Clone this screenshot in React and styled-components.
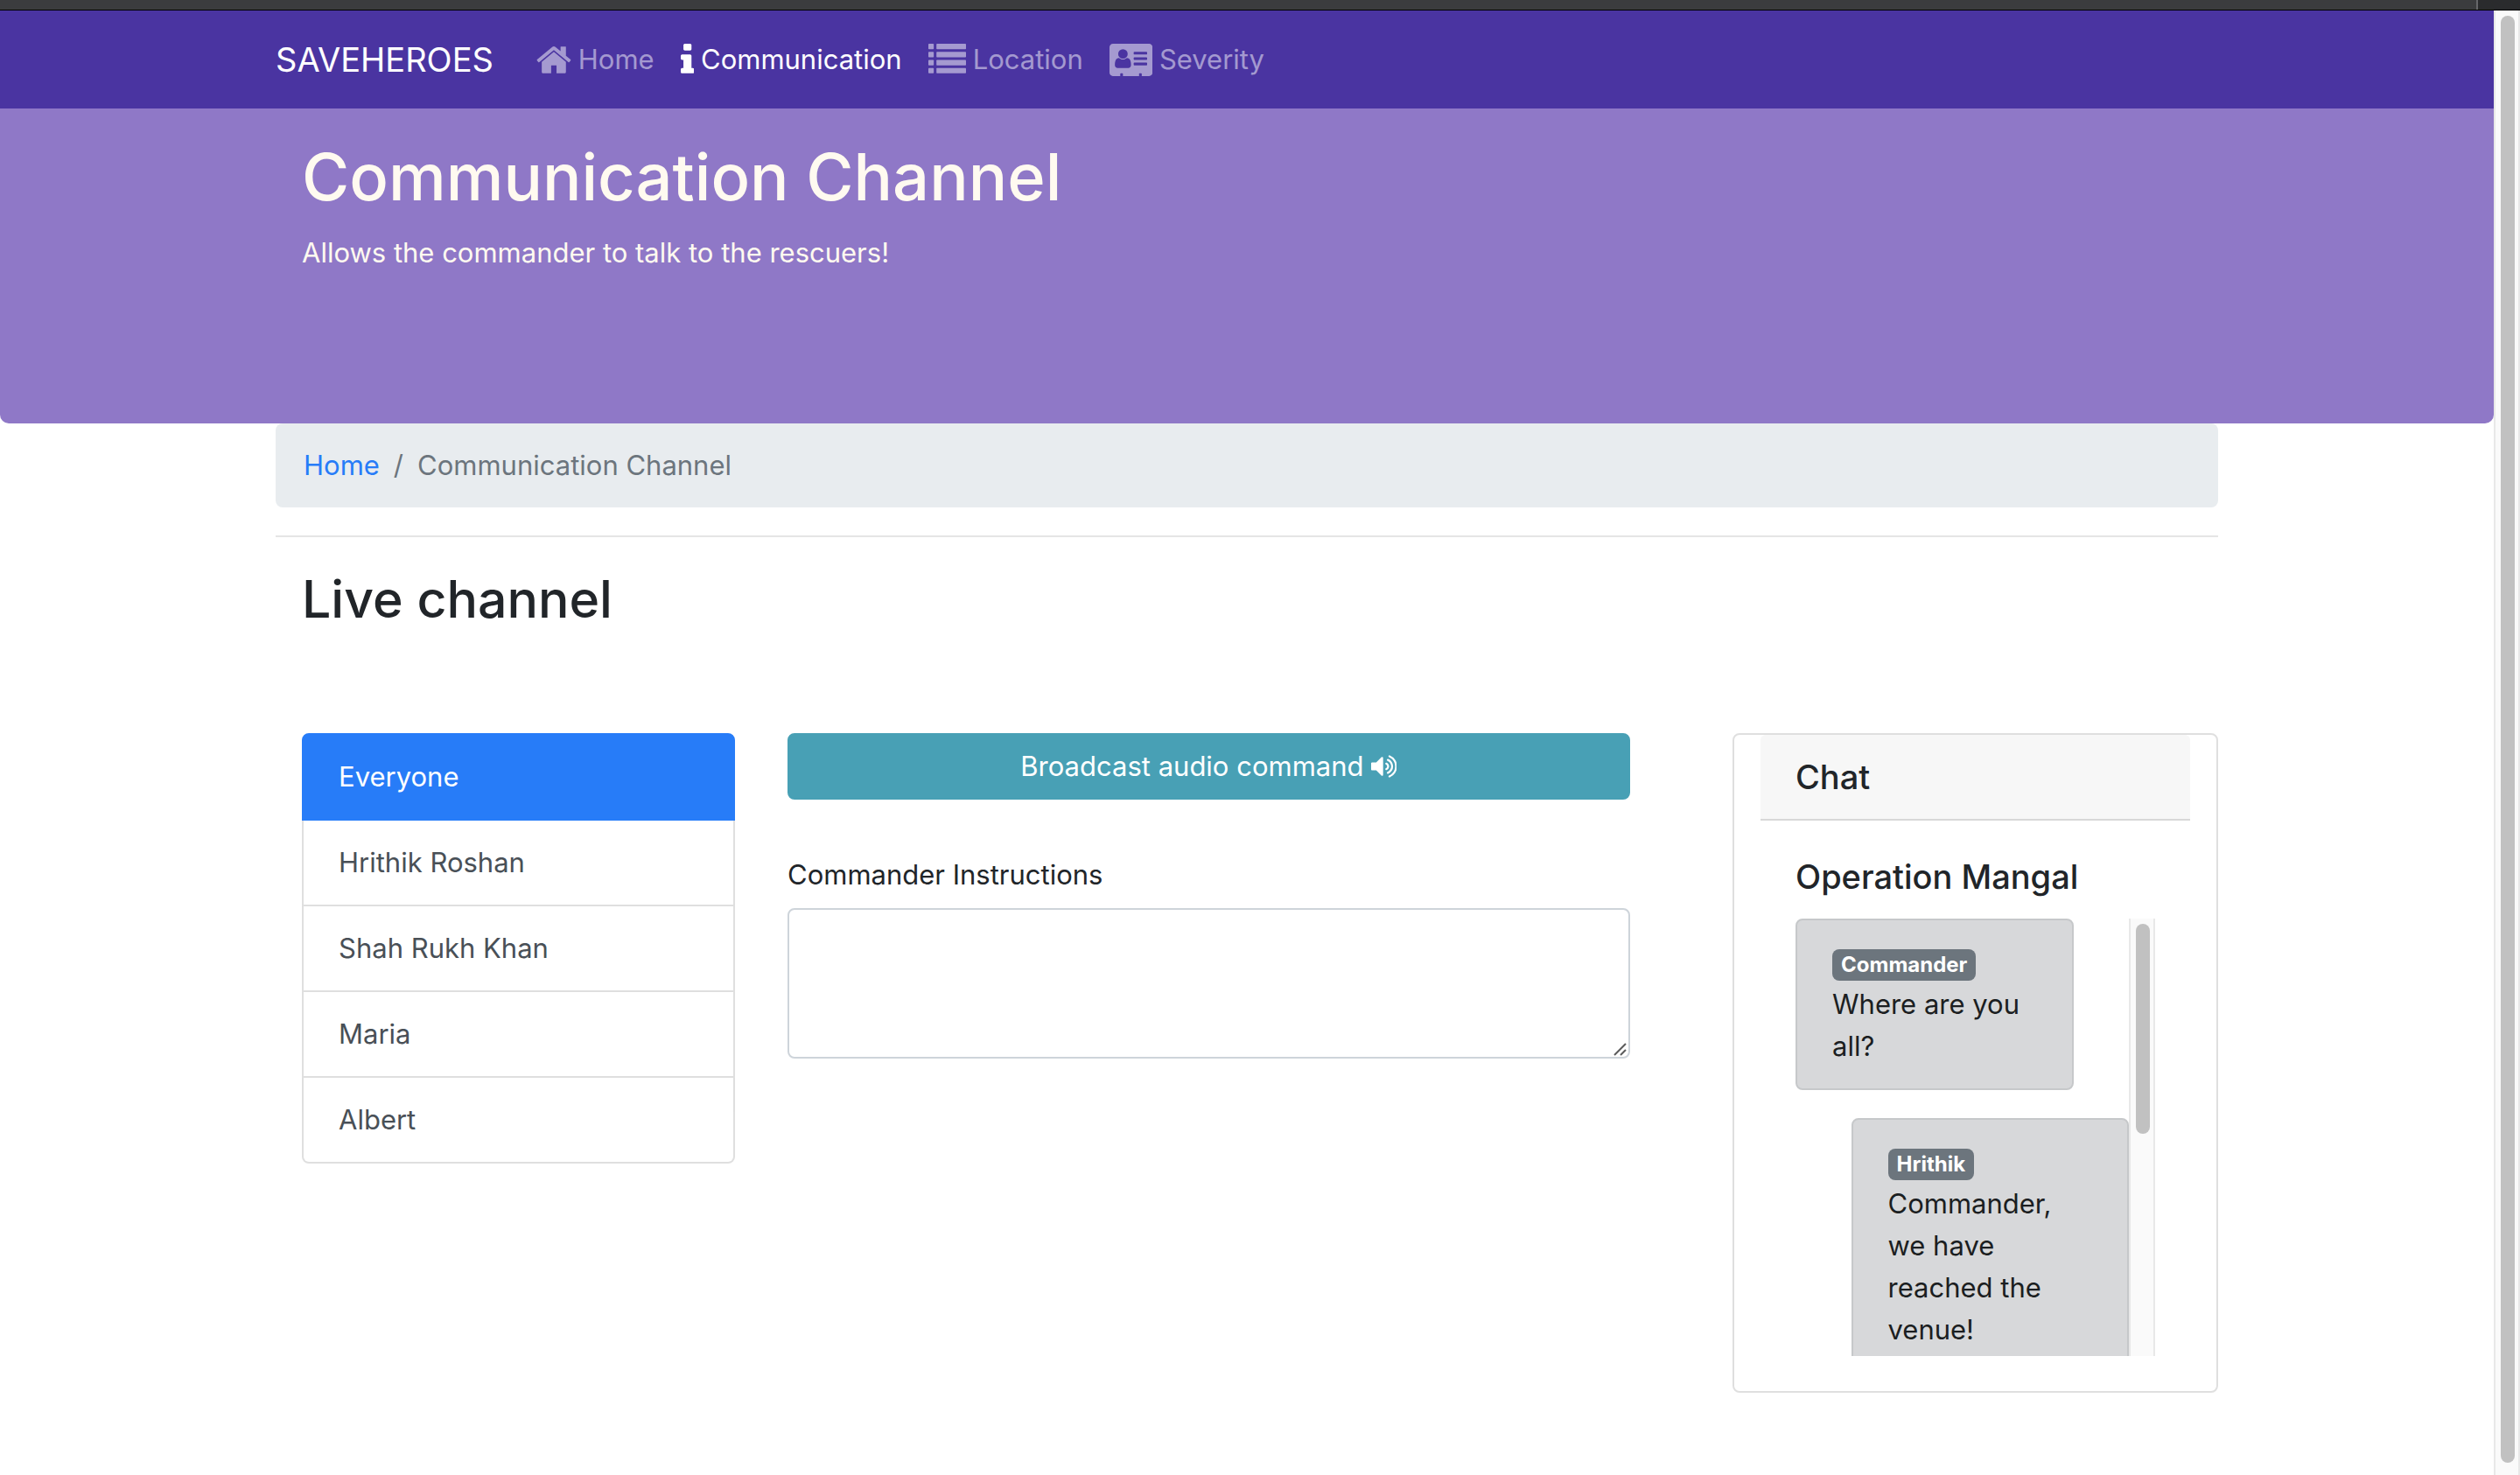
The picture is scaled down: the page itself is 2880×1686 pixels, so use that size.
import React from "react";
import styled, { createGlobalStyle, css } from "styled-components";

const GlobalStyle = createGlobalStyle`
  *, *::before, *::after { box-sizing: border-box; }
  body {
    margin: 0;
    background: #fff;
    color: #212529;
    font-family: Inter, "Liberation Sans", sans-serif;
    font-size: 31px;
    line-height: 48px;
  }
  h1, h2, h3, p, ol, ul { margin: 0; padding: 0; font-weight: inherit; }
  ol, ul { list-style: none; }
  a { color: inherit; text-decoration: none; }
`;

const Window = styled.div`
  display: flex;
  flex-direction: column;
  min-height: 100vh;
`;

const ToolbarEdge = styled.div`
  display: flex;
  height: 12px;
  background: #3b3c3e;
  border-bottom: 1px solid #000;
`;

const ToolbarCorner = styled.div`
  width: 50px;
  margin-left: auto;
  background: #2a2b2d;
  border-left: 2px solid #66676a;
`;

const Viewport = styled.div`
  display: flex;
  flex: 1;
`;

const Page = styled.div`
  flex: 1;
  min-width: 0;
`;

const Track = styled.div`
  display: flex;
  flex: none;
  width: 30px;
  padding: 6px 4px ${(p) => p.$end}px 6px;
  background: #fafafa;
  border: solid #e8e8e8;
  border-width: 0 2px;
`;

const Thumb = styled.div`
  width: 16px;
  height: ${(p) => p.$length};
  border-radius: 8px;
  background: #c1c1c1;
`;

const Container = styled.div`
  width: 100%;
  max-width: 2220px;
  margin: 0 auto;
  padding: 0 ${(p) => (p.$inset ? "30px" : "0")};
`;

const Navbar = styled.nav`
  background: #4a34a1;
  padding: 16px 0;
`;

const NavRow = styled(Container)`
  display: flex;
  align-items: center;
  min-height: 80px;
`;

const Brand = styled.a`
  margin-right: 34px;
  color: #fff;
  font-size: 38px;
`;

const NavList = styled.ul`
  display: flex;
`;

const NavLink = styled.a`
  display: flex;
  align-items: center;
  gap: 8px;
  padding: 16px 15px;
  color: ${(p) => (p.$active ? "#fff" : "rgba(255, 255, 255, 0.5)")};
`;

const Glyph = styled.svg`
  display: block;
  flex: none;
  height: ${(p) => p.$size}px;
  fill: currentColor;
`;

const Hero = styled.header`
  min-height: 360px;
  padding: 30px 0;
  border-radius: 0 0 10px 10px;
  background: #8f78c7;
  color: #fffaf0;
`;

const HeroTitle = styled.h1`
  margin-bottom: 15px;
  font-size: 74px;
  font-weight: 500;
  line-height: 96px;
`;

const Breadcrumb = styled.ol`
  display: flex;
  gap: 16px;
  padding: 24px 32px;
  border-radius: 8px;
  background: #e8ecef;
  color: #6c757d;
`;

const Crumb = styled.li`
  display: flex;
  gap: 16px;

  & + &::before {
    content: "/";
  }
`;

const CrumbLink = styled.a`
  color: #277cf8;
`;

const Rule = styled.hr`
  margin: 32px 0;
  border: 0;
  border-top: 2px solid rgba(0, 0, 0, 0.1);
`;

const SectionTitle = styled.h2`
  padding: 0 30px;
  margin-bottom: 114px;
  font-size: 59px;
  font-weight: 500;
  line-height: 78px;
`;

const Columns = styled.main`
  display: grid;
  grid-template-columns: 3fr 6fr 3fr;
  align-items: start;
`;

const Column = styled.section`
  min-width: 0;
  padding: 0 30px;
`;

const FormColumn = styled(Column)`
  display: grid;
  grid-template-columns: 11fr 1fr;
`;

const PersonList = styled.div`
  display: flex;
  flex-direction: column;
`;

const Person = styled.button`
  padding: 24px 40px;
  border: 2px solid rgba(0, 0, 0, 0.125);
  background: #fff;
  color: #495057;
  font: inherit;
  text-align: left;
  cursor: pointer;

  & + & {
    border-top: 0;
  }

  &:first-child {
    border-radius: 8px 8px 0 0;
  }

  &:last-child {
    border-radius: 0 0 8px 8px;
  }

  ${(p) =>
    p.$active &&
    css`
      border-color: #277cf8;
      background: #277cf8;
      color: #fff;
    `}
`;

const Form = styled.form`
  display: flex;
  flex-direction: column;
`;

const Broadcast = styled.button`
  display: flex;
  align-items: center;
  justify-content: center;
  gap: 8px;
  padding: 12px 24px;
  margin-bottom: 62px;
  border: 2px solid #48a0b5;
  border-radius: 8px;
  background: #48a0b5;
  color: #fff;
  font: inherit;
  cursor: pointer;
`;

const Label = styled.label`
  margin-bottom: 14px;
`;

const FieldWrap = styled.div`
  position: relative;
  display: flex;
`;

const TextArea = styled.textarea`
  width: 100%;
  height: 172px;
  padding: 12px 24px;
  border: 2px solid #ced4da;
  border-radius: 8px;
  background: #fff;
  color: #495057;
  font: inherit;
  resize: vertical;

  &::-webkit-resizer {
    background: transparent;
  }
`;

const Grip = styled.svg`
  position: absolute;
  right: 4px;
  bottom: 3px;
  width: 15px;
  height: 15px;
  stroke: #5c5c5c;
  stroke-width: 2;
  pointer-events: none;
`;

const Card = styled.section`
  min-width: 0;
  padding: 0 30px;
  border: 2px solid rgba(0, 0, 0, 0.125);
  border-radius: 8px;
`;

const CardHeader = styled.h2`
  padding: 24px 40px;
  border-bottom: 2px solid rgba(0, 0, 0, 0.125);
  border-radius: 6px 6px 0 0;
  background: #f7f7f7;
  font-size: 38px;
  font-weight: 500;
`;

const CardBody = styled.div`
  padding: 40px;
`;

const CardTitle = styled.h3`
  margin-bottom: 24px;
  font-size: 38px;
  font-weight: 500;
  white-space: nowrap;
`;

const ChatFrame = styled.div`
  display: flex;
  height: 500px;
`;

const Messages = styled.div`
  display: flex;
  flex: 1;
  flex-direction: column;
  gap: 32px;
  min-width: 0;
  overflow-y: auto;
  scrollbar-width: none;
`;

const Message = styled.article`
  flex: none;
  align-self: ${(p) => (p.$reply ? "flex-end" : "flex-start")};
  width: calc(100% * 5 / 6);
  padding: 24px 40px;
  border: 2px solid #c6c8ca;
  border-radius: 8px;
  background: #d7d8da;
  color: #1b1e21;
`;

const Badge = styled.span`
  display: inline-block;
  padding: 6px 10px;
  border-radius: 8px;
  background: #6c757d;
  color: #fff;
  font-size: 24px;
  font-weight: 700;
  line-height: 24px;
`;

const HomeIcon = () => (
  <Glyph $size={43} viewBox="64 0 1664 1792" aria-hidden="true">
    <path d="M1472 992v480q0 26-19 45t-45 19h-384v-384h-256v384h-384q-26 0-45-19t-19-45v-480q0-1 .5-3t.5-3l575-474 575 474q1 2 1 6zm223-69l-62 74q-8 9-21 11h-3q-13 0-21-7l-692-577-692 577q-12 8-24 7-13-2-21-11l-62-74q-8-10-7-23.5t11-21.5l719-599q32-26 76-26t76 26l244 204v-195q0-14 9-23t23-9h192q14 0 23 9t9 23v408l219 182q10 8 11 21.5t-7 23.5z" />
  </Glyph>
);

const InfoIcon = () => (
  <Glyph $size={43} viewBox="576 0 640 1792" aria-hidden="true">
    <path d="M1216 1344v128q0 26-19 45t-45 19h-512q-26 0-45-19t-19-45v-128q0-26 19-45t45-19h64v-384h-64q-26 0-45-19t-19-45v-128q0-26 19-45t45-19h384q26 0 45 19t19 45v576h64q26 0 45 19t19 45zm-128-1152v192q0 26-19 45t-45 19h-256q-26 0-45-19t-19-45v-192q0-26 19-45t45-19h256q26 0 45 19t19 45z" />
  </Glyph>
);

const ListIcon = () => (
  <Glyph $size={43} viewBox="0 0 1792 1792" aria-hidden="true">
    {[128, 512, 896, 1280].map((y) => (
      <React.Fragment key={y}>
        <rect x="0" y={y} width="256" height="256" rx="32" />
        <rect x="384" y={y} width="1408" height="256" rx="32" />
      </React.Fragment>
    ))}
  </Glyph>
);

const CardIcon = () => (
  <Glyph $size={43} viewBox="0 0 2048 1792" aria-hidden="true">
    <path d="M1024 1131q0-64-9-117.5t-29.5-103-60.5-78-97-28.5q-6 4-30 18t-37.5 21.5-35.5 17.5-43 14.5-42 4.5-42-4.5-43-14.5-35.5-17.5-37.5-21.5-30-18q-57 0-97 28.5t-60.5 78-29.5 103-9 117.5 37 106.5 91 42.5h512q54 0 91-42.5t37-106.5zm-157-520q0-94-66.5-160.5t-160.5-66.5-160.5 66.5-66.5 160.5 66.5 160.5 160.5 66.5 160.5-66.5 66.5-160.5zm925 509v-64q0-14-9-23t-23-9h-576q-14 0-23 9t-9 23v64q0 14 9 23t23 9h576q14 0 23-9t9-23zm0-260v-56q0-15-10.5-25.5t-25.5-10.5h-568q-15 0-25.5 10.5t-10.5 25.5v56q0 15 10.5 25.5t25.5 10.5h568q15 0 25.5-10.5t10.5-25.5zm0-252v-64q0-14-9-23t-23-9h-576q-14 0-23 9t-9 23v64q0 14 9 23t23 9h576q14 0 23-9t9-23zm256-320v1216q0 66-47 113t-113 47h-352v-96q0-14-9-23t-23-9h-64q-14 0-23 9t-9 23v96h-768v-96q0-14-9-23t-23-9h-64q-14 0-23 9t-9 23v96h-352q-66 0-113-47t-47-113v-1216q0-66 47-113t113-47h1728q66 0 113 47t47 113z" />
  </Glyph>
);

const VolumeIcon = () => (
  <Glyph $size={32} viewBox="64 0 1664 1792" aria-hidden="true">
    <path d="M832 352v1088q0 26-19 45t-45 19-45-19l-333-333h-262q-26 0-45-19t-19-45v-384q0-26 19-45t45-19h262l333-333q19-19 45-19t45 19 19 45zm384 544q0 76-42.5 141.5t-112.5 93.5q-10 5-25 5-26 0-45-18.5t-19-45.5q0-21 12-35.5t29-25 34-23 29-36 12-56.5-12-56.5-29-36-34-23-29-25-12-35.5q0-27 19-45.5t45-18.5q15 0 25 5 70 27 112.5 93t42.5 142zm256 0q0 153-85 282.5t-225 188.5q-13 5-25 5-27 0-46-19t-19-45q0-39 39-59 56-29 76-44 74-54 115.5-135.5t41.5-173.5-41.5-173.5-115.5-135.5q-20-15-76-44-39-20-39-59 0-26 19-45t45-19q13 0 26 5 140 59 225 188.5t85 282.5zm256 0q0 230-127 422.5t-338 283.5q-13 5-26 5-26 0-45-19t-19-45q0-36 39-59 7-4 22.5-10.5t22.5-10.5q46-25 82-51 123-91 192-227t69-289-69-289-192-227q-36-26-82-51-7-4-22.5-10.5t-22.5-10.5q-39-23-39-59 0-26 19-45t45-19q13 0 26 5 211 91 338 283.5t127 422.5z" />
  </Glyph>
);

const links = [
  { label: "Home", Icon: HomeIcon },
  { label: "Communication", Icon: InfoIcon, active: true },
  { label: "Location", Icon: ListIcon },
  { label: "Severity", Icon: CardIcon },
];

const people = ["Everyone", "Hrithik Roshan", "Shah Rukh Khan", "Maria", "Albert"];

const messages = [
  { from: "Commander", text: "Where are you all?" },
  { from: "Hrithik", text: "Commander, we have reached the venue!", reply: true },
];

export default function App() {
  return (
    <>
      <GlobalStyle />
      <Window>
        <ToolbarEdge>
          <ToolbarCorner />
        </ToolbarEdge>
        <Viewport>
          <Page>
            <Navbar>
              <NavRow>
                <Brand href="#">SAVEHEROES</Brand>
                <NavList>
                  {links.map(({ label, Icon, active }) => (
                    <li key={label}>
                      <NavLink href="#" $active={active}>
                        <Icon />
                        {label}
                      </NavLink>
                    </li>
                  ))}
                </NavList>
              </NavRow>
            </Navbar>
            <Hero>
              <Container $inset>
                <HeroTitle>Communication Channel</HeroTitle>
                <p>Allows the commander to talk to the rescuers!</p>
              </Container>
            </Hero>
            <Container>
              <Breadcrumb>
                <Crumb>
                  <CrumbLink href="#">Home</CrumbLink>
                </Crumb>
                <Crumb>Communication Channel</Crumb>
              </Breadcrumb>
              <Rule />
              <SectionTitle>Live channel</SectionTitle>
              <Columns>
                <Column>
                  <PersonList>
                    {people.map((name, i) => (
                      <Person key={name} type="button" $active={i === 0}>
                        {name}
                      </Person>
                    ))}
                  </PersonList>
                </Column>
                <FormColumn>
                  <Form>
                    <Broadcast type="button">
                      Broadcast audio command
                      <VolumeIcon />
                    </Broadcast>
                    <Label htmlFor="instructions">Commander Instructions</Label>
                    <FieldWrap>
                      <TextArea id="instructions" />
                      <Grip viewBox="0 0 15 15" aria-hidden="true">
                        <path d="M1 14L14 1M8 14L14 8" />
                      </Grip>
                    </FieldWrap>
                  </Form>
                </FormColumn>
                <Card>
                  <CardHeader>Chat</CardHeader>
                  <CardBody>
                    <CardTitle>Operation Mangal</CardTitle>
                    <ChatFrame>
                      <Messages>
                        {messages.map((m) => (
                          <Message key={m.from} $reply={m.reply}>
                            <Badge>{m.from}</Badge>
                            <p>{m.text}</p>
                          </Message>
                        ))}
                      </Messages>
                      <Track $end={6}>
                        <Thumb $length="240px" />
                      </Track>
                    </ChatFrame>
                  </CardBody>
                </Card>
              </Columns>
            </Container>
          </Page>
          <Track $end={14}>
            <Thumb $length="100%" />
          </Track>
        </Viewport>
      </Window>
    </>
  );
}
